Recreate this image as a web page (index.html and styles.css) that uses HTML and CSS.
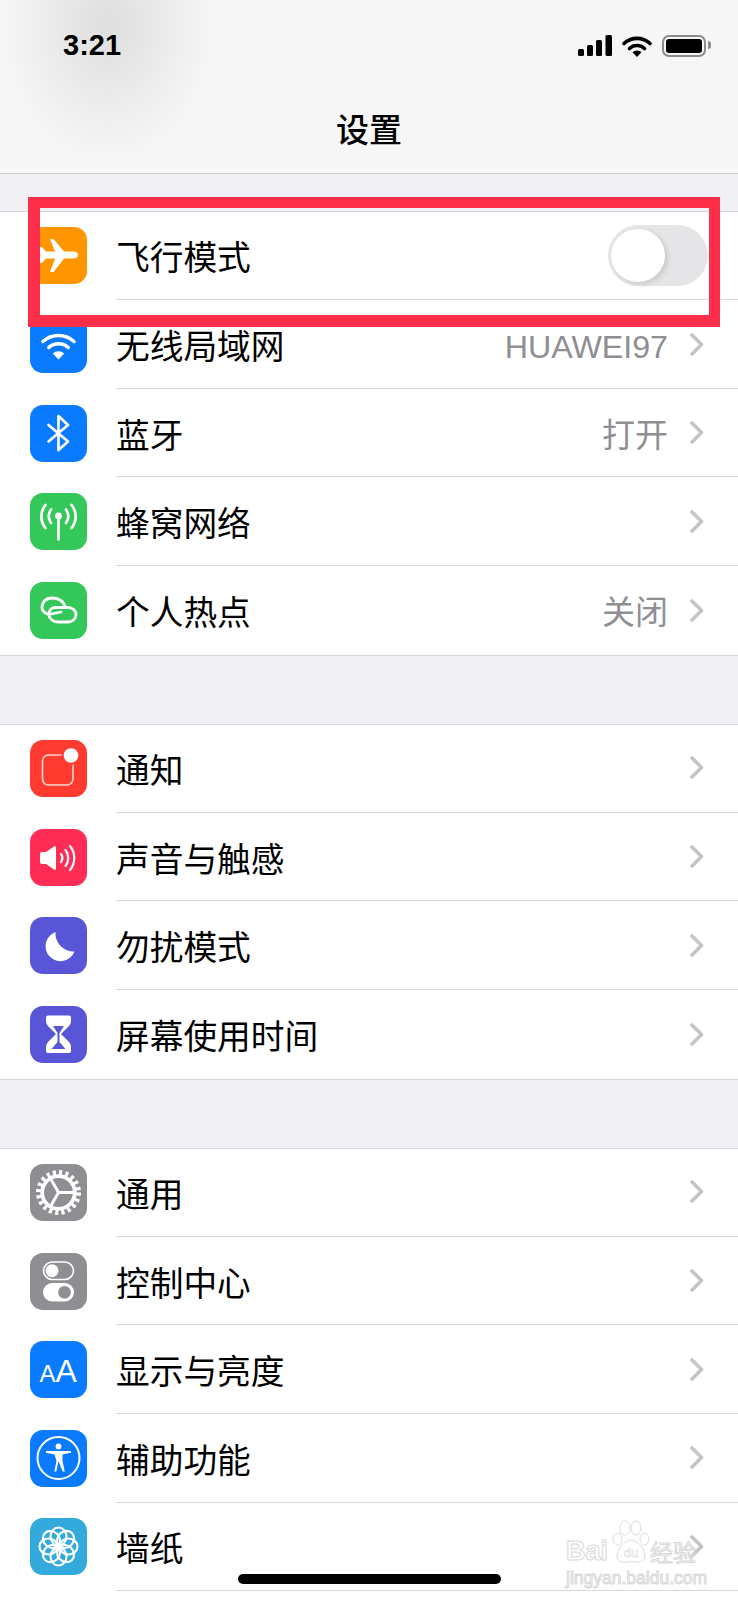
FILE: index.html
```html
<!DOCTYPE html>
<html lang="zh">
<head>
    <meta charset="UTF-8">
    <meta name="viewport" content="width=device-width, initial-scale=1.0">
    <title>设置</title>
    <link rel="stylesheet" href="styles.css">
</head>
<body>

<div class="screen">
    <header class="top">
        <div class="status">
            <span class="time">3:21</span>
            <div class="status-icons">
                <svg width="34" height="21" viewBox="0 0 34 21">
                    <rect x="0" y="14" width="6" height="7" rx="1.5"/>
                    <rect x="9" y="10" width="6" height="11" rx="1.5"/>
                    <rect x="18" y="5" width="6" height="16" rx="1.5"/>
                    <rect x="27.5" y="0" width="6.5" height="21" rx="1.5"/>
                </svg>
                <svg width="30" height="22" viewBox="0 0 30 22">
                    <path d="M2 8.5A19 19 0 0 1 28 8.5" fill="none" stroke="#000" stroke-width="3.6" stroke-linecap="round"/>
                    <path d="M7.5 13.5A11 11 0 0 1 22.5 13.5" fill="none" stroke="#000" stroke-width="3.6" stroke-linecap="round"/>
                    <path d="M15 22L10.5 17.2A6.5 6.5 0 0 1 19.5 17.2Z"/>
                </svg>
                <div class="battery"><div class="battery-fill"></div></div>
            </div>
        </div>
        <h1 class="title">设置</h1>
    </header>

    <section class="group group-first">
        <div class="row">
            <span class="icon orange">
                <svg viewBox="0 0 57 57"><path fill="#fff" d="M20 12h3.500L34 24.500H43q5 0 5 3.500t-5 3.500H34L23.500 45H20l5-13.500H16L12 36H8.500l2-8-2-8H12l4 4.500h9z"/></svg>
            </span>
            <div class="row-body">
                <span class="label">飞行模式</span>
                <span class="toggle"><span class="knob"></span></span>
            </div>
        </div>
        <div class="row">
            <span class="icon blue">
                <svg viewBox="0 0 57 57"><g fill="none" stroke="#fff" stroke-width="3.600" stroke-linecap="round"><path d="M13 25.500A23 23 0 0 1 44 25.500"/><path d="M18.800 31.500A14.500 14.500 0 0 1 38.200 31.500"/></g><path fill="#fff" d="M28.500 43.500L22.800 37.500A8.500 8.500 0 0 1 34.200 37.500Z"/></svg>
            </span>
            <div class="row-body">
                <span class="label">无线局域网</span>
                <span class="value value-latin">HUAWEI97</span>
                <svg class="chevron" viewBox="0 0 14 23"><path d="M2 2l9.500 9.500L2 21"/></svg>
            </div>
        </div>
        <div class="row">
            <span class="icon blue">
                <svg viewBox="0 0 57 57"><path fill="none" stroke="#fff" stroke-width="2.700" stroke-linejoin="round" stroke-linecap="round" d="M18.500 20L38 36.500 28.500 45V11L38 20 18.500 36.500"/></svg>
            </span>
            <div class="row-body">
                <span class="label">蓝牙</span>
                <span class="value">打开</span>
                <svg class="chevron" viewBox="0 0 14 23"><path d="M2 2l9.500 9.500L2 21"/></svg>
            </div>
        </div>
        <div class="row">
            <span class="icon green">
                <svg viewBox="0 0 57 57"><g fill="none" stroke="#fff" stroke-width="2.700" stroke-linecap="round"><path d="M15.500 12A18 18 0 0 0 15.500 35"/><path d="M41.500 12A18 18 0 0 1 41.500 35"/><path d="M21 16.500A11 11 0 0 0 21 30"/><path d="M36 16.500A11 11 0 0 1 36 30"/><path d="M28.500 24V46.500"/></g><circle cx="28.500" cy="23" r="3.400" fill="#fff"/></svg>
            </span>
            <div class="row-body">
                <span class="label">蜂窝网络</span>
                <svg class="chevron" viewBox="0 0 14 23"><path d="M2 2l9.500 9.500L2 21"/></svg>
            </div>
        </div>
        <div class="row">
            <span class="icon green">
                <svg viewBox="0 0 57 57"><g fill="none" stroke="#fff" stroke-width="2.800" stroke-linecap="round"><path d="M35 25C34 19 28 16 22 16 15 16 12 21 12 25 12 30 17 33 21 32L31 30"/><path d="M25 25.500H37C42 25.500 46 28 46 32.500 46 37 42 40 38 40H28C23 40 19 36.500 19 32.500 19 28.500 21 25.500 25 25.500Z"/></g></svg>
            </span>
            <div class="row-body">
                <span class="label">个人热点</span>
                <span class="value">关闭</span>
                <svg class="chevron" viewBox="0 0 14 23"><path d="M2 2l9.500 9.500L2 21"/></svg>
            </div>
        </div>
    </section>

    <section class="group">
        <div class="row">
            <span class="icon red">
                <svg viewBox="0 0 57 57"><rect x="12.500" y="15" width="30.500" height="30" rx="6" fill="none" stroke="#ffd6d0" stroke-width="1.600"/><circle cx="41" cy="15.500" r="9.500" fill="#ff3b30"/><circle cx="41" cy="15.500" r="7.300" fill="#fff"/></svg>
            </span>
            <div class="row-body">
                <span class="label">通知</span>
                <svg class="chevron" viewBox="0 0 14 23"><path d="M2 2l9.500 9.500L2 21"/></svg>
            </div>
        </div>
        <div class="row">
            <span class="icon pink">
                <svg viewBox="0 0 57 57"><path fill="#fff" d="M10 25q0-2 2-2h4l8-5.500q2-1 2 1V39.500q0 2-2 1L16 35h-4q-2 0-2-2z"/><g fill="none" stroke="#fff" stroke-width="2.200" stroke-linecap="round"><path d="M31 25A7 7 0 0 1 31 33"/><path d="M35.500 21A13 13 0 0 1 35.500 37"/><path d="M40 17A19 19 0 0 1 40 41"/></g></svg>
            </span>
            <div class="row-body">
                <span class="label">声音与触感</span>
                <svg class="chevron" viewBox="0 0 14 23"><path d="M2 2l9.500 9.500L2 21"/></svg>
            </div>
        </div>
        <div class="row">
            <span class="icon indigo">
                <svg viewBox="0 0 57 57"><path fill="#fff" d="M25.500 15A15 15 0 1 0 44.500 34.500 18 18 0 0 1 25.500 15Z"/></svg>
            </span>
            <div class="row-body">
                <span class="label">勿扰模式</span>
                <svg class="chevron" viewBox="0 0 14 23"><path d="M2 2l9.500 9.500L2 21"/></svg>
            </div>
        </div>
        <div class="row">
            <span class="icon indigo">
                <svg viewBox="0 0 57 57"><path fill="#fff" d="M18 9.500H39q2 0 2 2V15q0 3-2 5l-8 8 8 8q2 2 2 5v4q0 2-2 2H18q-2 0-2-2v-4q0-3 2-5l8-8-8-8q-2-2-2-5v-3.500q0-2 2-2Z"/><path fill="#5856d6" d="M23 20H34L29.500 27V36L35.500 43H21.500L27.500 36V27Z"/></svg>
            </span>
            <div class="row-body">
                <span class="label">屏幕使用时间</span>
                <svg class="chevron" viewBox="0 0 14 23"><path d="M2 2l9.500 9.500L2 21"/></svg>
            </div>
        </div>
    </section>

    <section class="group">
        <div class="row">
            <span class="icon gray">
                <svg viewBox="0 0 57 57"><g fill="none" stroke="#fff"><circle cx="28.500" cy="28.500" r="20" stroke-width="5" stroke-dasharray="3.140 3.140"/><circle cx="28.500" cy="28.500" r="16.300" stroke-width="3.800"/><path stroke-width="3" d="M28.500 28.500H44M28.500 28.500L20.500 14.500M28.500 28.500L20.500 42.500"/></g></svg>
            </span>
            <div class="row-body">
                <span class="label">通用</span>
                <svg class="chevron" viewBox="0 0 14 23"><path d="M2 2l9.500 9.500L2 21"/></svg>
            </div>
        </div>
        <div class="row">
            <span class="icon gray">
                <svg viewBox="0 0 57 57"><rect x="13.500" y="9" width="30" height="17.500" rx="8.750" fill="none" stroke="#fff" stroke-width="1.600"/><circle cx="22" cy="17.750" r="6.500" fill="#fff"/><rect x="13" y="30" width="31" height="18.500" rx="9.250" fill="#fff"/><circle cx="34.500" cy="39.250" r="6.300" fill="#8e8e93"/></svg>
            </span>
            <div class="row-body">
                <span class="label">控制中心</span>
                <svg class="chevron" viewBox="0 0 14 23"><path d="M2 2l9.500 9.500L2 21"/></svg>
            </div>
        </div>
        <div class="row">
            <span class="icon blue">
                <svg viewBox="0 0 57 57"><text class="aa-small" x="9.500" y="40.500">A</text><text class="aa-big" x="25.500" y="40.500">A</text></svg>
            </span>
            <div class="row-body">
                <span class="label">显示与亮度</span>
                <svg class="chevron" viewBox="0 0 14 23"><path d="M2 2l9.500 9.500L2 21"/></svg>
            </div>
        </div>
        <div class="row">
            <span class="icon blue">
                <svg viewBox="0 0 57 57"><circle cx="28.500" cy="28" r="21" fill="none" stroke="#fff" stroke-width="2"/><circle cx="28.500" cy="16.500" r="2.900" fill="#fff"/><path fill="#fff" d="M16 21h25v1.800l-8.500 1.700V31l2.200 10.500h-2L28.800 32h-.6l-1.900 9.500h-2L26.500 31 24.500 24.500 16 22.800Z"/></svg>
            </span>
            <div class="row-body">
                <span class="label">辅助功能</span>
                <svg class="chevron" viewBox="0 0 14 23"><path d="M2 2l9.500 9.500L2 21"/></svg>
            </div>
        </div>
        <div class="row">
            <span class="icon sky">
                <svg viewBox="0 0 57 57"><g fill="none" stroke="#fff" stroke-width="2.100">
                    <ellipse cx="28.500" cy="18.500" rx="8" ry="9"/>
                    <ellipse cx="28.500" cy="18.500" rx="8" ry="9" transform="rotate(45 28.500 28.500)"/>
                    <ellipse cx="28.500" cy="18.500" rx="8" ry="9" transform="rotate(90 28.500 28.500)"/>
                    <ellipse cx="28.500" cy="18.500" rx="8" ry="9" transform="rotate(135 28.500 28.500)"/>
                    <ellipse cx="28.500" cy="18.500" rx="8" ry="9" transform="rotate(180 28.500 28.500)"/>
                    <ellipse cx="28.500" cy="18.500" rx="8" ry="9" transform="rotate(225 28.500 28.500)"/>
                    <ellipse cx="28.500" cy="18.500" rx="8" ry="9" transform="rotate(270 28.500 28.500)"/>
                    <ellipse cx="28.500" cy="18.500" rx="8" ry="9" transform="rotate(315 28.500 28.500)"/>
                </g><circle cx="28.500" cy="28.500" r="3.600" fill="#fff"/></svg>
            </span>
            <div class="row-body">
                <span class="label">墙纸</span>
                <svg class="chevron" viewBox="0 0 14 23"><path d="M2 2l9.500 9.500L2 21"/></svg>
            </div>
        </div>
        <div class="row"></div>
    </section>

    <!-- overlays on top of the screenshot -->
    <div class="highlight"></div>
    <div class="home-bar"></div>
    <div class="watermark">
        <div class="wm-top">
            <span class="wm-bai">Bai</span>
            <svg class="wm-paw" viewBox="0 0 38 44">
                <g fill="none" stroke="#dcdcdc" stroke-width="1">
                    <ellipse cx="13" cy="8" rx="5" ry="7"/>
                    <ellipse cx="24" cy="8" rx="5" ry="7"/>
                    <ellipse cx="5.500" cy="19" rx="4.500" ry="6"/>
                    <ellipse cx="32.500" cy="19" rx="4.500" ry="6"/>
                    <path d="M19 20C12 20 5 30 5 36 5 42 12 44 19 41 26 44 33 42 33 36 33 30 26 20 19 20Z"/>
                </g>
                <text class="wm-du" x="19" y="37">du</text>
            </svg>
            <span class="wm-cn">经验</span>
        </div>
        <span class="wm-url">jingyan.baidu.com</span>
    </div>
</div>

</body>
</html>
```

FILE: styles.css
```css
html, body {
    margin: 0;
    padding: 0;
    height: 1600px;
    overflow: hidden;
}
body {
    font-family: "Noto Sans CJK SC", "Liberation Sans", sans-serif;
    background-color: #efeff4;
    color: #000;
}
.screen {
    position: relative;
    height: 1600px;
    overflow: hidden;
}

/* header */
.top {
    height: 173px;
    border-bottom: 1px solid #cfcfd4;
    background: radial-gradient(ellipse 105px 135px at 108px 25px, #dedede, rgba(222, 222, 222, 0)), #f6f6f7;
    display: flex;
    flex-direction: column;
}
.status {
    display: flex;
    justify-content: space-between;
    align-items: center;
    height: 23px;
    padding: 34px 32px 0 63px;
}
.time {
    font-family: "Liberation Sans", sans-serif;
    font-size: 29px;
    font-weight: 700;
    line-height: 23px;
}
.status-icons {
    display: flex;
    align-items: center;
    gap: 10px;
}
.battery {
    position: relative;
    width: 44px;
    height: 22px;
    box-sizing: border-box;
    border: 2px solid #8c8c8c;
    border-radius: 7px;
    padding: 2px;
}
.battery::after {
    content: "";
    position: absolute;
    right: -7px;
    top: 4px;
    width: 3px;
    height: 8px;
    background-color: #8c8c8c;
    border-radius: 0 3px 3px 0;
}
.battery-fill {
    height: 100%;
    background-color: #000;
    border-radius: 3px;
}
.title {
    margin: 0;
    padding-top: 47px;
    text-align: center;
    font-size: 33px;
    font-weight: 500;
    line-height: 48px;
}

/* groups */
.group {
    margin-top: 68px;
    background-color: #fff;
    border-top: 1px solid #d4d4d9;
    border-bottom: 1px solid #d4d4d9;
}
.group-first {
    margin-top: 37px;
}
.row {
    display: flex;
    align-items: center;
    gap: 29px;
    height: 88.6px;
    padding-left: 30px;
}
.row:first-child {
    margin-top: -0.4px;
}
.row-body {
    flex: 1;
    align-self: stretch;
    display: flex;
    align-items: center;
    padding-right: 34px;
    border-bottom: 1px solid #d8d8dc;
}
.row:last-child .row-body {
    border-bottom: none;
}
.label {
    flex: 1;
    font-size: 33.7px;
    line-height: 44px;
    padding-top: 2px;
}
.value {
    font-family: "Liberation Sans", "Noto Sans CJK SC", sans-serif;
    font-size: 33px;
    line-height: 44px;
    padding-top: 6px;
    color: #8e8e93;
    margin-right: 22px;
}
.value-latin {
    font-size: 32.2px;
}
.chevron {
    width: 14px;
    height: 23px;
    fill: none;
    stroke: #c4c4c7;
    stroke-width: 3.6;
    stroke-linecap: round;
    stroke-linejoin: round;
}

/* icons */
.icon {
    flex: none;
    width: 57px;
    height: 57px;
    border-radius: 13px;
}
.icon svg {
    display: block;
    width: 57px;
    height: 57px;
}
.orange { background-color: #ff9500; }
.blue { background-color: #0a7aff; }
.green { background-color: #34c759; }
.red { background-color: #ff3b30; }
.pink { background-color: #ff2d55; }
.indigo { background-color: #5856d6; }
.gray { background-color: #8e8e93; }
.sky { background-color: #34aadc; }
.aa-small, .aa-big {
    font-family: "Liberation Sans", sans-serif;
    fill: #fff;
}
.aa-small { font-size: 24px; }
.aa-big { font-size: 32px; }

/* switch */
.toggle {
    display: block;
    width: 100px;
    height: 61px;
    box-sizing: border-box;
    margin-right: -4px;
    padding: 4px 3px;
    border-radius: 31px;
    background-color: #e5e5e7;
}
.knob {
    display: block;
    width: 54px;
    height: 53px;
    border-radius: 50%;
    background-color: #fff;
    box-shadow: 3px 2px 5px rgba(0, 0, 0, 0.12);
}

/* overlays */
.highlight {
    position: absolute;
    left: 28px;
    top: 197px;
    width: 692px;
    height: 130px;
    box-sizing: border-box;
    border: 12px solid #fd2f4a;
    border-top-width: 11px;
    border-right-width: 11px;
}
.home-bar {
    position: absolute;
    left: 238px;
    top: 1574px;
    width: 263px;
    height: 10px;
    border-radius: 5px;
    background-color: #000;
}
.watermark {
    position: absolute;
    left: 566px;
    top: 1520px;
    width: 134px;
    display: flex;
    flex-direction: column;
}
.wm-top {
    display: flex;
    align-items: flex-end;
    height: 44px;
}
.wm-bai, .wm-cn, .wm-url {
    color: transparent;
    -webkit-text-stroke: 1px #d8d8d8;
}
.wm-bai {
    font-family: "Liberation Sans", sans-serif;
    font-size: 27px;
    font-weight: 700;
    line-height: 26px;
    width: 46px;
}
.wm-paw {
    width: 38px;
    height: 44px;
}
.wm-du {
    font-family: "Liberation Sans", sans-serif;
    font-size: 13px;
    text-anchor: middle;
    fill: none;
    stroke: #dcdcdc;
    stroke-width: 0.6;
}
.wm-cn {
    font-size: 23px;
    line-height: 26px;
    white-space: nowrap;
}
.wm-url {
    font-family: "Liberation Sans", sans-serif;
    font-size: 17.5px;
    line-height: 22px;
    margin-top: 3px;
    white-space: nowrap;
}
```
